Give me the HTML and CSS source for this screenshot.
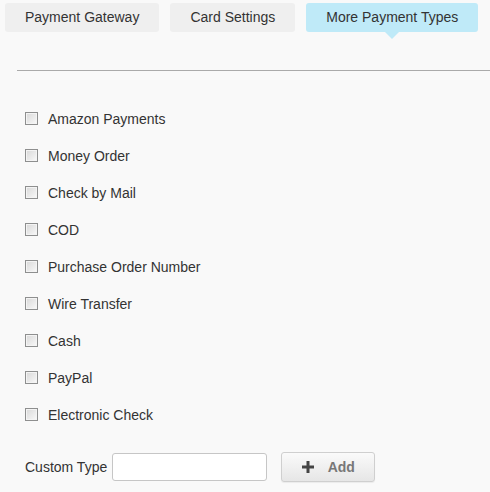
FILE: index.html
```html
<!DOCTYPE html>
<html>
<head>
<meta charset="utf-8">
<link rel="stylesheet" href="styles.css">
</head>
<body>
<div class="page">
  <div class="tabs">
    <div class="tab">Payment Gateway</div>
    <div class="tab">Card Settings</div>
    <div class="tab active">More Payment Types</div>
  </div>
  <div class="rule"></div>
  <ul class="types">
    <li class="type"><span class="cb"></span><span>Amazon Payments</span></li>
    <li class="type"><span class="cb"></span><span>Money Order</span></li>
    <li class="type"><span class="cb"></span><span>Check by Mail</span></li>
    <li class="type"><span class="cb"></span><span>COD</span></li>
    <li class="type"><span class="cb"></span><span>Purchase Order Number</span></li>
    <li class="type"><span class="cb"></span><span>Wire Transfer</span></li>
    <li class="type"><span class="cb"></span><span>Cash</span></li>
    <li class="type"><span class="cb"></span><span>PayPal</span></li>
    <li class="type"><span class="cb"></span><span>Electronic Check</span></li>
  </ul>
  <div class="custom">
    <span class="custom-label">Custom Type</span>
    <span class="input"></span>
    <span class="add-btn">
      <svg class="plus" width="12" height="12" viewBox="0 0 12 12"><rect x="4.5" y="0" width="3" height="12" fill="#444"/><rect x="0" y="4.5" width="12" height="3" fill="#444"/></svg>
      <span class="add-text">Add</span>
    </span>
  </div>
</div>
</body>
</html>
```
FILE: styles.css
```css
html, body {
  margin: 0;
  padding: 0;
  background: #f9f9f9;
}
body {
  font-family: "Liberation Sans", Arial, sans-serif;
  font-size: 14px;
  color: #333;
  width: 490px;
  height: 492px;
  overflow: hidden;
}
.page {
  padding-top: 3px;
}
.tabs {
  display: flex;
  gap: 11px;
  padding-left: 5px;
}
.tab {
  position: relative;
  height: 29px;
  line-height: 29px;
  padding: 0 20px;
  background: #efefef;
  border-radius: 3px;
  color: #333;
  white-space: nowrap;
}
.tab.active {
  background: #bfeaf8;
}
.tab.active::after {
  content: "";
  position: absolute;
  left: 50%;
  top: 29px;
  margin-left: -7px;
  border-left: 7px solid transparent;
  border-right: 7px solid transparent;
  border-top: 7px solid #bfeaf8;
}
.rule {
  margin: 38px 0 0 17px;
  height: 1px;
  background: #aaa;
}
.types {
  list-style: none;
  margin: 29px 0 0 0;
  padding: 0 0 0 25px;
}
.type {
  height: 37px;
  display: flex;
  align-items: center;
  gap: 10px;
  color: #333;
}
.cb {
  box-sizing: border-box;
  width: 13px;
  height: 13px;
  border: 1px solid #8e8f8f;
  background: linear-gradient(135deg, #d8d8d8 0%, #efefef 70%, #fbfbfb 100%);
  box-shadow: inset 0 0 0 1px #f4f4f4;
  flex: none;
}
.custom {
  display: flex;
  align-items: center;
  margin-top: 19px;
  padding-left: 25px;
  height: 30px;
}
.custom-label {
  margin-right: 5px;
}
.input {
  box-sizing: border-box;
  width: 155px;
  height: 28px;
  background: #fff;
  border: 1px solid #c6c6c6;
  border-radius: 3px;
}
.add-btn {
  box-sizing: border-box;
  margin-left: 14px;
  width: 94px;
  height: 30px;
  border: 1px solid #cfcfcf;
  border-radius: 3px;
  background: linear-gradient(#fafafa, #e6e6e6);
  box-shadow: 0 1px 1px rgba(0,0,0,0.06);
  display: flex;
  align-items: center;
  justify-content: center;
  gap: 14px;
}
.plus {
  display: block;
}
.add-text {
  font-weight: bold;
  color: #777;
}
```
